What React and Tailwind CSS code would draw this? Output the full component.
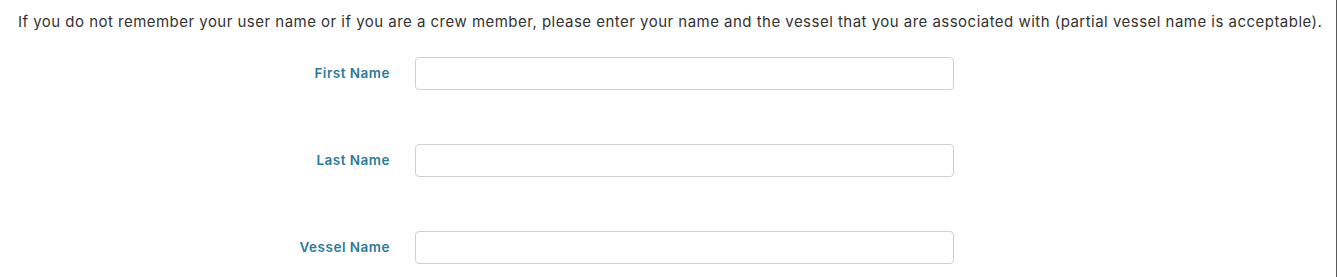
// Recover-account form: name and vessel lookup for crew members
export default function App() {
  const fields = [
    { id: "firstName", label: "First Name" },
    { id: "lastName", label: "Last Name" },
    { id: "vesselName", label: "Vessel Name" },
  ];

  return (
    <div
      className="w-[1337px] min-h-[277px] border-r border-[#5a5a5a] bg-white"
      style={{ fontFamily: "Inter, 'Noto Sans', sans-serif" }}
    >
      <p className="pt-[12px] pl-[18px] text-[15px] leading-[20px] text-[#333333] tracking-[0.475px] whitespace-nowrap">
        If you do not remember your user name or if you are a crew member, please enter your name and the vessel that you are associated with (partial vessel name is acceptable).
      </p>

      <form className="mt-[25px] flex flex-col gap-[54px]">
        {fields.map((f) => (
          <div key={f.id} className="flex items-center">
            <label
              htmlFor={f.id}
              className="w-[390px] text-right text-[13.5px] font-semibold tracking-[0.5px] text-[#2a7b9b]"
            >
              {f.label}
            </label>
            <input
              id={f.id}
              type="text"
              className="ml-[25px] h-[33px] w-[539px] rounded-[4px] border border-[#cfcfcf] bg-white px-3 text-[14px] outline-none"
            />
          </div>
        ))}
      </form>
    </div>
  );
}
